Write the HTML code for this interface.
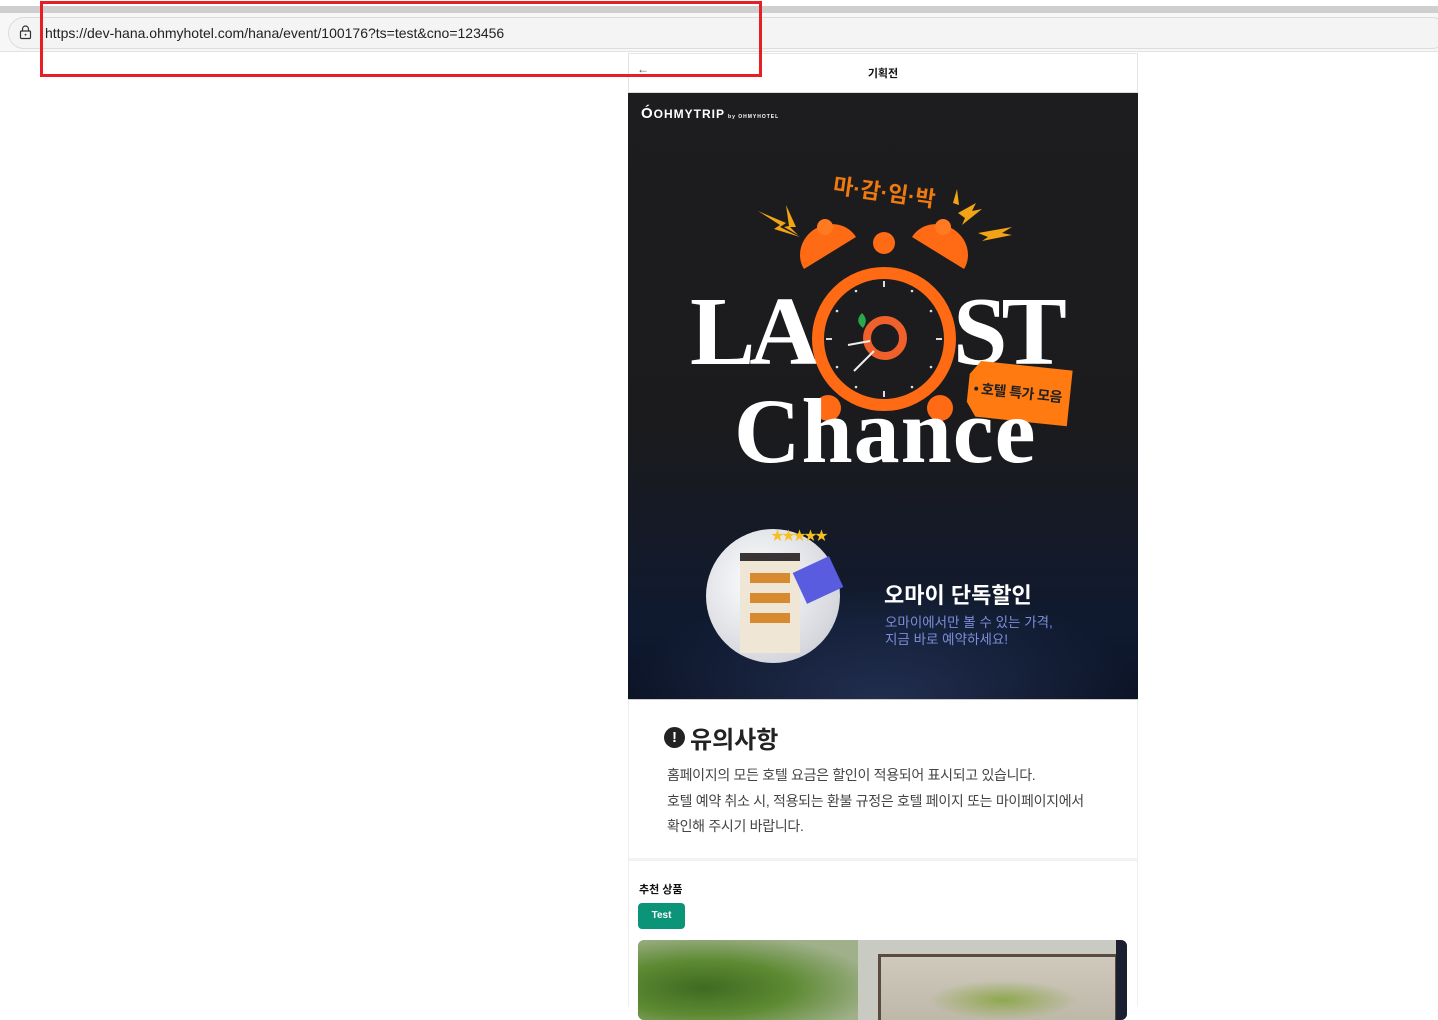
<!DOCTYPE html>
<html><head><meta charset="utf-8"><style>
*{margin:0;padding:0;box-sizing:border-box}
body{width:1438px;height:1007px;overflow:hidden;background:#fff;position:relative;font-family:"Liberation Sans","Noto Sans CJK KR",sans-serif}
.abs{position:absolute}
</style></head><body>
<div class="abs" style="left:0;top:0;width:1438px;height:6px;background:#fff"></div>
<div class="abs" style="left:0;top:6px;width:1438px;height:7px;background:#cfcfcf"></div>
<div class="abs" style="left:0;top:13px;width:1438px;height:39px;background:#f7f7f7;border-bottom:1px solid #e2e2e2"></div>
<div class="abs" style="left:8px;top:17px;width:1440px;height:32px;background:#f4f4f4;border:1px solid #dcdcdc;border-radius:16px"></div>
<svg class="abs" style="left:19px;top:25px" width="13" height="15" viewBox="0 0 13 15"><rect x="1.5" y="6" width="10" height="7.5" rx="1" fill="none" stroke="#333" stroke-width="1.2"/><path d="M3.5 6V4a3 3 0 0 1 6 0v2" fill="none" stroke="#333" stroke-width="1.2"/><circle cx="6.5" cy="9.7" r="0.9" fill="#333"/></svg>
<div class="abs" style="left:45px;top:25px;font-size:14px;color:#222">https://dev-hana.ohmyhotel.com/hana/event/100176?ts=test&amp;cno=123456</div>

<!-- header -->
<div class="abs" style="left:628px;top:53px;width:510px;height:40px;background:#fff;border:1px solid #e4e4e4;border-bottom:1px solid #ddd"></div>
<div class="abs" style="left:637px;top:62px;font-size:12px;color:#555">←</div>
<div class="abs" style="left:628px;top:65px;width:510px;text-align:center;font-size:11px;font-weight:bold;color:#111">기획전</div>

<!-- poster -->
<div class="abs" style="left:628px;top:93px;width:510px;height:606px;overflow:hidden;background:linear-gradient(180deg,#1d1d1f 0%,#1b1b1d 55%,#141a28 75%,#0f1a30 88%,#0c1326 100%)">
 <div class="abs" style="left:-50px;top:470px;width:610px;height:200px;background:radial-gradient(ellipse at 50% 70%,rgba(60,80,130,.45),rgba(0,0,0,0) 60%)"></div>
 <div class="abs" style="left:13px;top:12px;font-size:15px;font-weight:bold;color:#fff;letter-spacing:1px">Ó<span style="font-size:12px">OHMYTRIP</span><span style="font-size:5px;margin-left:3px">by OHMYHOTEL</span></div>
 <div class="abs" style="left:205px;top:82px;font-size:22px;font-weight:bold;color:#f07a10;transform:rotate(8deg)">마·감·임·박</div>
 <div class="abs" style="left:62px;top:190px;font-family:'Liberation Serif',serif;font-weight:bold;font-size:98px;color:#fff;letter-spacing:-6px;line-height:1">LA</div>
 <div class="abs" style="left:325px;top:190px;font-family:'Liberation Serif',serif;font-weight:bold;font-size:98px;color:#fff;letter-spacing:-6px;line-height:1">ST</div>
 <svg class="abs" style="left:0;top:0" width="510" height="606">
  <g fill="#f3a414"><path d="M130 118l28 12-6 4 20 10-26-8 6-4z"/><path d="M158 112l10 22-6 0 8 8-14-8 5-1z"/><path d="M330 120l18 -10-4 8 10-2-20 16 3-7z"/><path d="M350 140l34-6-10 6 10 2-30 6 6-4z"/><path d="M325 110l4-14 2 16z"/></g>
  <path d="M176 176a28 26 -30 0 1 52 -32z" fill="#ff6a14"/>
  <path d="M336 176a28 26 30 0 0 -52 -32z" fill="#ff6a14"/>
  <circle cx="256" cy="150" r="11" fill="#ff6a14"/>
  <circle cx="197" cy="134" r="8" fill="#ff7a20"/><circle cx="315" cy="134" r="8" fill="#ff7a20"/>
  <circle cx="200" cy="315" r="13" fill="#ff6a14"/><circle cx="312" cy="315" r="13" fill="#ff6a14"/>
  <circle cx="256" cy="246" r="66" fill="#1c1c1e" stroke="#ff6a14" stroke-width="12"/>
  <g stroke="#ddd" stroke-width="2"><path d="M256 188v6M256 298v6M198 246h6M308 246h6"/></g>
  <g fill="#ddd"><circle cx="228" cy="198" r="1.3"/><circle cx="284" cy="198" r="1.3"/><circle cx="228" cy="294" r="1.3"/><circle cx="284" cy="294" r="1.3"/><circle cx="209" cy="218" r="1.3"/><circle cx="303" cy="218" r="1.3"/><circle cx="209" cy="274" r="1.3"/><circle cx="303" cy="274" r="1.3"/></g>
  <circle cx="257" cy="245" r="18" fill="none" stroke="#f0602a" stroke-width="8"/>
  <path d="M234 220q-8 8 1 15q6-8-1-15z" fill="#2aa84a"/>
  <path d="M242 248l-22 4M246 258l-20 20" stroke="#eee" stroke-width="2"/>
  <g transform="rotate(6 390 300)"><path d="M340 286l10-14h92v56h-92l-10-14z" fill="#ff7a10"/><circle cx="348" cy="300" r="2" fill="#222"/></g>
 </svg>
 <div class="abs" style="left:353px;top:290px;font-size:14px;font-weight:bold;color:#222;transform:rotate(6deg);letter-spacing:-0.5px">호텔 특가 모음</div>
 <div class="abs" style="left:106px;top:292px;font-family:'Liberation Serif',serif;font-weight:bold;font-size:92px;color:#fff;letter-spacing:1px;line-height:1">Chance</div>
 <!-- bottom circle -->
 <div class="abs" style="left:78px;top:436px;width:134px;height:134px;border-radius:50%;background:radial-gradient(circle at 40% 40%,#fff,#d6d8de 70%,#b8bcc6)"></div>
 <div class="abs" style="left:112px;top:460px;width:60px;height:100px;background:#efe6d6;border-top:8px solid #3a3434"></div>
 <div class="abs" style="left:122px;top:480px;width:40px;height:60px;background:repeating-linear-gradient(180deg,#d88a30 0 10px,#efe6d6 10px 20px)"></div>
 <div class="abs" style="left:170px;top:470px;width:40px;height:34px;background:#5a5ce0;transform:rotate(-25deg)"></div>
 <div class="abs" style="left:143px;top:432px;font-size:13px;color:#f5c020;letter-spacing:-2px">★★★★★</div>
 <div class="abs" style="left:256px;top:485px;font-size:22px;font-weight:bold;color:#fff">오마이 단독할인</div>
 <div class="abs" style="left:257px;top:521px;font-size:13.5px;color:#7d8ed8;line-height:17px">오마이에서만 볼 수 있는 가격,<br>지금 바로 예약하세요!</div>
</div>

<!-- red highlight -->
<div class="abs" style="left:40px;top:1px;width:722px;height:76px;border:3px solid #e51f24"></div>

<!-- notice -->
<div class="abs" style="left:628px;top:699px;width:510px;height:308px;border-left:1px solid #eee;border-right:1px solid #eee;border-top:1px solid #ccc"></div>
<div class="abs" style="left:664px;top:727px;width:21px;height:21px;border-radius:50%;background:#222;color:#fff;font-weight:bold;font-size:15px;text-align:center;line-height:21px">!</div>
<div class="abs" style="left:690px;top:720px;font-size:24px;font-weight:bold;color:#222">유의사항</div>
<div class="abs" style="left:667px;top:763px;font-size:14px;color:#444;line-height:25.5px;letter-spacing:-0.3px">홈페이지의 모든 호텔 요금은 할인이 적용되어 표시되고 있습니다.<br>호텔 예약 취소 시, 적용되는 환불 규정은 호텔 페이지 또는 마이페이지에서<br>확인해 주시기 바랍니다.</div>
<div class="abs" style="left:629px;top:858px;width:508px;height:3px;background:#f2f2f2"></div>
<div class="abs" style="left:639px;top:881px;font-size:11px;font-weight:bold;color:#111">추천 상품</div>
<div class="abs" style="left:638px;top:903px;width:47px;height:26px;background:#0b9478;border-radius:4px;color:#fff;font-size:10px;font-weight:bold;text-align:center;line-height:26px">Test</div>
<div class="abs" style="left:638px;top:940px;width:489px;height:80px;border-radius:6px;overflow:hidden;background:#c9cbc2">
 <div class="abs" style="left:0;top:0;width:220px;height:80px;background:radial-gradient(ellipse at 30% 60%,#3f6a22,#5d8a32 40%,#9fb08a 80%)"></div>
 <div class="abs" style="left:240px;top:14px;width:240px;height:70px;border:3px solid #5a4a40;background:linear-gradient(180deg,#cfc9bd,#bdb8a8)"></div>
 <div class="abs" style="left:290px;top:40px;width:150px;height:40px;background:radial-gradient(ellipse,#8fa84e,rgba(140,160,80,0) 70%)"></div>
 <div class="abs" style="left:478px;top:0;width:11px;height:80px;background:#1a2030"></div>
</div>
</body></html>
